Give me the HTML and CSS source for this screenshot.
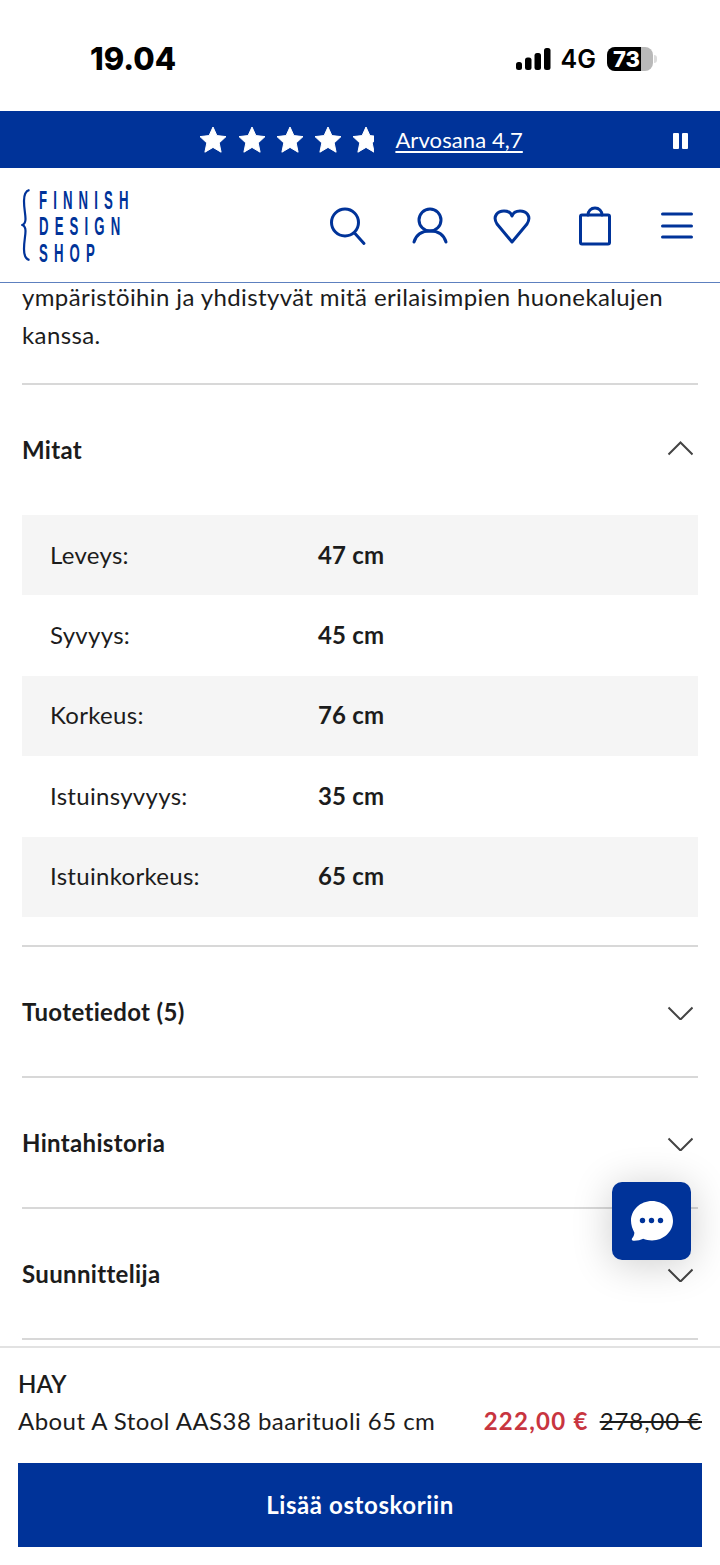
FILE: index.html
```html
<!DOCTYPE html>
<html lang="fi">
<head>
<meta charset="utf-8">
<title>About A Stool AAS38</title>
<link rel="stylesheet" href="styles.css">
</head>
<body>
<div class="page">
  <div class="status">
    <span class="time">19.04</span>
    <div class="status-right">
      <svg class="signal" width="36" height="22" viewBox="0 0 36 22"><rect x="1" y="14" width="6" height="8" rx="2.500"/><rect x="10" y="9.500" width="6.500" height="12.500" rx="2.500"/><rect x="19.500" y="5" width="6.500" height="17" rx="2.500"/><rect x="29" y="0" width="6.500" height="22" rx="2.500"/></svg>
      <span class="net">4G</span>
      <div class="battery"><div class="battery-fill"></div><span class="battery-num">73</span></div>
      <span class="battery-tip"></span>
    </div>
  </div>

  <div class="promo">
    <div class="stars">
      <svg width="28" height="27" viewBox="0 0 28 27"><path class="star" d="M14 1l3.900 8.600 9.100 1-6.800 6.300 1.900 9.300L14 21.400l-8.100 4.800 1.900-9.300L1 10.600l9.100-1z"/></svg>
      <svg width="28" height="27" viewBox="0 0 28 27"><path class="star" d="M14 1l3.900 8.600 9.100 1-6.800 6.300 1.900 9.300L14 21.400l-8.100 4.800 1.900-9.300L1 10.600l9.100-1z"/></svg>
      <svg width="28" height="27" viewBox="0 0 28 27"><path class="star" d="M14 1l3.900 8.600 9.100 1-6.800 6.300 1.900 9.300L14 21.400l-8.100 4.800 1.900-9.300L1 10.600l9.100-1z"/></svg>
      <svg width="28" height="27" viewBox="0 0 28 27"><path class="star" d="M14 1l3.900 8.600 9.100 1-6.800 6.300 1.900 9.300L14 21.400l-8.100 4.800 1.900-9.300L1 10.600l9.100-1z"/></svg>
      <svg width="22" height="27" viewBox="0 0 22 27"><path class="star" d="M14 1l3.900 8.600 9.100 1-6.800 6.300 1.900 9.300L14 21.400l-8.100 4.800 1.900-9.300L1 10.600l9.100-1z"/></svg>
    </div>
    <a class="rating" href="#">Arvosana 4,7</a>
    <div class="pause"><span></span><span></span></div>
  </div>

  <header class="header">
    <div class="logo">
      <svg class="brace" width="10" height="72" viewBox="0 0 10 72"><path d="M8.500 1C4 2 3 6 3 12c0 8 1.500 13 1.500 18 0 3-1 5-3 6 2 1 3 3 3 6 0 5-1.500 10-1.500 18 0 6 1 10 5.500 11"/></svg>
      <div class="logo-text">
        <span>FINNISH</span>
        <span>DESIGN</span>
        <span>SHOP</span>
      </div>
    </div>
    <nav class="icons">
      <svg width="40" height="40" viewBox="0 0 40 40"><circle cx="18" cy="16.500" r="13.500"/><path d="M28 27.500l9 10"/></svg>
      <svg width="40" height="40" viewBox="0 0 40 40"><circle cx="20" cy="14" r="11"/><path d="M4 36c2-7 8-11 16-11s14 4 16 11"/></svg>
      <svg width="40" height="40" viewBox="0 0 40 40"><path d="M20 36L5 18C0 10 6 5 12 5c4 0 7 2 8 5 1-3 4-5 8-5 6 0 12 5 7 13z"/></svg>
      <svg width="40" height="40" viewBox="0 0 40 40"><rect x="5.500" y="9" width="29" height="29" rx="1.500"/><path d="M13 9c0-4 3-7 7-7s7 3 7 7"/></svg>
      <svg width="40" height="40" viewBox="0 0 40 40"><path d="M5.500 8h29M5.500 20h29M5.500 31h29"/></svg>
    </nav>
  </header>

  <main class="main">
    <p class="lead">ympäristöihin ja yhdistyvät mitä erilaisimpien huonekalujen kanssa.</p>

    <section class="acc acc-open">
      <div class="acc-head">
        <span>Mitat</span>
        <svg class="chev" width="28" height="16" viewBox="0 0 28 16"><path d="M3.500 13.500L15.500 1.500l12 12"/></svg>
      </div>
      <div class="spec">
        <div class="spec-row"><span class="spec-k">Leveys:</span><span class="spec-v">47 cm</span></div>
        <div class="spec-row"><span class="spec-k">Syvyys:</span><span class="spec-v">45 cm</span></div>
        <div class="spec-row"><span class="spec-k">Korkeus:</span><span class="spec-v">76 cm</span></div>
        <div class="spec-row"><span class="spec-k">Istuinsyvyys:</span><span class="spec-v">35 cm</span></div>
        <div class="spec-row"><span class="spec-k">Istuinkorkeus:</span><span class="spec-v">65 cm</span></div>
      </div>
    </section>

    <section class="acc">
      <div class="acc-head"><span>Tuotetiedot (5)</span><svg class="chev" width="28" height="16" viewBox="0 0 28 16"><path d="M3.500 3.500l12 12 12-12"/></svg></div>
    </section>
    <section class="acc">
      <div class="acc-head"><span>Hintahistoria</span><svg class="chev" width="28" height="16" viewBox="0 0 28 16"><path d="M3.500 3.500l12 12 12-12"/></svg></div>
    </section>
    <section class="acc acc-last">
      <div class="acc-head"><span>Suunnittelija</span><svg class="chev" width="28" height="16" viewBox="0 0 28 16"><path d="M3.500 3.500l12 12 12-12"/></svg></div>
    </section>
  </main>

  <button class="chat" type="button" aria-label="Chat">
    <svg width="44" height="42" viewBox="0 0 44 42"><path class="bubble" d="M22 1C33.600 1 43 9.800 43 20.800S33.600 40.500 22 40.500c-3.300 0-6-.6-8.800-1.700-2.700 1.400-6 2-9.700 1.900-1.700-.1-2.300-1.500-1.200-2.700 1.200-1.400 1.900-3.100 2.100-5.300C2.500 29 1 25 1 20.800 1 9.800 10.400 1 22 1z"/><circle class="dot" cx="12.500" cy="20.500" r="2.700"/><circle class="dot" cx="21.500" cy="20.500" r="2.700"/><circle class="dot" cx="30.500" cy="20.500" r="2.700"/></svg>
  </button>

  <footer class="buybar">
    <div class="brand">HAY</div>
    <div class="product-row">
      <span class="product">About A Stool AAS38 baarituoli 65 cm</span>
      <span class="prices"><span class="price">222,00 €</span><span class="old">278,00 €</span></span>
    </div>
    <button class="cta" type="button">Lisää ostoskoriin</button>
  </footer>
</div>
</body>
</html>
```
FILE: styles.css
```css
* { box-sizing: border-box; }
html, body { margin: 0; padding: 0; background: #fff; }
body { font-family: "Lato", "Liberation Sans", sans-serif; color: #1c1c1c; font-variant-ligatures: none; }
.page { position: relative; width: 720px; height: 1565px; overflow: hidden; display: flex; flex-direction: column; }

.status { height: 111px; flex: none; display: flex; justify-content: space-between; align-items: center; padding: 7px 63px 0 90px; }
.time { font-family: "Inter", "Liberation Sans", sans-serif; font-weight: 800; font-size: 31px; color: #000; margin-top: -2px; }
.status-right { display: flex; align-items: center; }
.signal { fill: #000; margin-right: 10px; }
.net { font-family: "Inter", "Liberation Sans", sans-serif; font-weight: 600; font-size: 25px; color: #000; margin-right: 11px; }
.battery { position: relative; width: 46px; height: 24px; border-radius: 8px; background: #b9b9b9; overflow: hidden; }
.battery-fill { width: 34px; height: 100%; background: #000; }
.battery-num { position: absolute; left: 6px; top: 0; font-family: "Inter", sans-serif; font-weight: 800; font-size: 22px; line-height: 24px; color: #fff; }
.battery-tip { width: 3px; height: 8px; margin-left: 1px; border-radius: 0 3px 3px 0; background: #dcdcdc; }

.promo { position: relative; height: 57px; flex: none; background: #003399; color: #fff; display: flex; align-items: center; justify-content: center; padding-left: 2px; }
.stars { display: flex; gap: 10.300px; margin-right: 21px; }
.star { fill: #fff; stroke: #fff; stroke-width: 1; stroke-linejoin: round; }
.rating { color: #fff; font-size: 22px; letter-spacing: .1px; text-decoration: underline; text-underline-offset: 3px; text-decoration-thickness: 1.500px; }
.pause { position: absolute; right: 32px; top: 22px; display: flex; gap: 3px; }
.pause span { width: 6px; height: 16px; background: #fff; border-radius: 1px; }

.header { height: 115px; flex: none; border-bottom: 1px solid #5d80bf; display: flex; align-items: center; justify-content: space-between; padding: 0 23px 0 21px; color: #003399; }
.logo { display: flex; align-items: center; gap: 8px; }
.brace { fill: none; stroke: #003399; stroke-width: 2.200; }
.logo-text { display: flex; flex-direction: column; width: 100px; padding-top: 2px; font-family: "Liberation Sans", sans-serif; font-size: 22px; font-weight: 700; line-height: 23px; letter-spacing: 10.200px; white-space: nowrap; transform: scale(.6, 1.15); transform-origin: left center; }
.logo-text span { display: block; height: 23px; }
.icons { display: flex; gap: 42.500px; padding-top: 2px; }
.icons svg { fill: none; stroke: #003399; stroke-width: 3; stroke-linecap: round; stroke-linejoin: round; overflow: visible; }

.main { flex: 1; min-height: 0; padding: 0 22px; overflow: hidden; }
.lead { margin: -5px 0 0; font-size: 24px; line-height: 38px; letter-spacing: .38px; padding-bottom: 29px; }
.acc { border-top: 2px solid #d8d8d8; }
.acc-last { border-bottom: 2px solid #d8d8d8; }
.acc-head { height: 129px; display: flex; align-items: center; justify-content: space-between; padding-right: 5px; font-size: 24px; font-weight: 700; letter-spacing: .33px; }
.acc-open .acc-head { height: 130px; padding-bottom: 2px; }
.chev { fill: none; stroke: #444; stroke-width: 2; }
.spec { padding-bottom: 28.500px; }
.spec-row { height: 80.400px; display: flex; align-items: center; padding: 0 0 2px 28px; font-size: 24px; letter-spacing: .3px; }
.spec-row:nth-child(odd) { background: #f5f5f5; }
.spec-k { width: 268px; }
.spec-v { font-weight: 700; letter-spacing: .2px; }

.chat { position: absolute; left: 612px; top: 1182px; width: 79px; height: 78px; padding: 0; border: 0; border-radius: 10px; background: #003399; box-shadow: 0 4px 40px rgba(0,0,0,.2); display: flex; align-items: center; justify-content: center; }
.bubble { fill: #fff; }
.dot { fill: #003399; }

.buybar { height: 219px; flex: none; border-top: 2px solid #e2e2e2; background: #fff; padding: 0 18px; position: relative; }
.brand { font-size: 24px; font-weight: 600; line-height: 30px; margin-top: 21px; }
.product-row { display: flex; justify-content: space-between; font-size: 24px; line-height: 30px; margin-top: 7px; letter-spacing: .45px; }
.prices { display: flex; gap: 11px; }
.price { color: #c8353f; font-weight: 700; letter-spacing: 1.250px; }
.old { text-decoration: line-through; letter-spacing: .9px; }
.cta { display: block; width: 100%; height: 84px; margin-top: 27px; padding: 0 0 1px; border: 0; background: #003399; color: #fff; font-family: inherit; font-size: 24px; font-weight: 700; letter-spacing: .6px; }
```
